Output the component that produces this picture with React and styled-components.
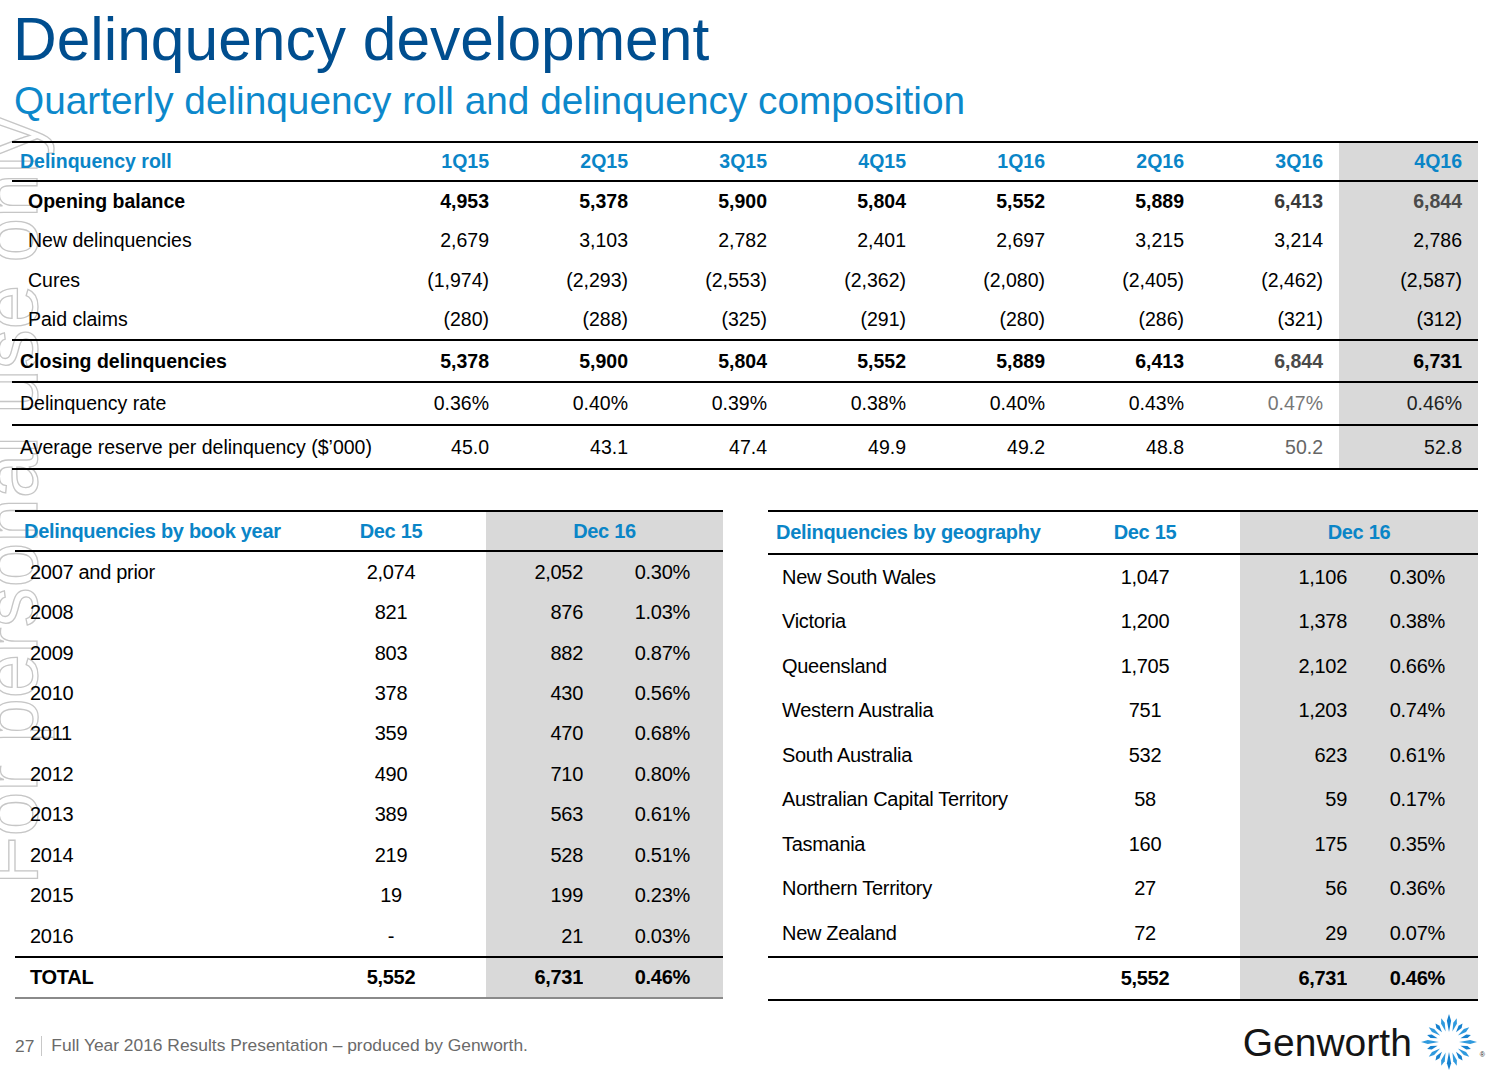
import React from "react";
import styled, { createGlobalStyle } from "styled-components";

const Global = createGlobalStyle`
  html, body { margin: 0; padding: 0; background: #fff; }
  body { font-family: "Liberation Sans", Arial, sans-serif; color: #000; }
`;

const Page = styled.div`
  position: relative;
  width: 1491px;
  height: 1071px;
  overflow: hidden;
  background: #fff;
`;

const Watermark = styled.div`
  position: absolute;
  left: -30px;
  top: 885px;
  transform-origin: 0 0;
  transform: rotate(-90deg);
  font-family: "Liberation Sans", Arial, sans-serif;
  font-size: 80px;
  line-height: 1;
  white-space: nowrap;
  color: transparent;
  -webkit-text-stroke: 1.3px #c6c6c6;
  z-index: 0;
  pointer-events: none;
`;

const Content = styled.div`
  position: relative;
  z-index: 1;
  display: flex;
  flex-direction: column;
  padding: 9px 13px 0 12px;
`;

const Title = styled.h1`
  margin: 0 0 0 1px;
  font-weight: 400;
  font-size: 60.5px;
  line-height: 60px;
  white-space: nowrap;
  color: #004e8f;
`;

const Subtitle = styled.h2`
  margin: 12px 0 0 2px;
  font-weight: 400;
  font-size: 38.8px;
  line-height: 39px;
  white-space: nowrap;
  color: #0c88cb;
`;

/* ---------- top table ---------- */
const RollTable = styled.div`
  margin-top: 21px;
  width: 1466px;
  border-top: 2px solid #000;
  display: flex;
  flex-direction: column;
`;

const RollRow = styled.div`
  display: grid;
  grid-template-columns: 354px repeat(7, 139px) 139px;
  height: ${(p) => p.$h}px;
  border-bottom: ${(p) => (p.$line ? "2px solid #000" : "none")};
  font-size: 19.5px;
  font-weight: ${(p) => (p.$bold ? 700 : 400)};
`;

const RollLabel = styled.div`
  display: flex;
  align-items: center;
  white-space: nowrap;
  padding-left: ${(p) => p.$indent}px;
  color: ${(p) => (p.$head ? "#0a85c7" : "#000")};
`;

const RollValue = styled.div`
  display: flex;
  align-items: center;
  justify-content: flex-end;
  padding-right: 16px;
  color: ${(p) => (p.$head ? "#0a85c7" : p.$tone || "#000")};
  background: ${(p) => (p.$shade ? "#d9d9d9" : "transparent")};
`;

/* ---------- bottom tables ---------- */
const BottomArea = styled.div`
  margin-top: 40px;
  display: flex;
  align-items: flex-start;
  gap: 45px;
  padding-left: 3px;
`;

const Table = styled.div`
  width: ${(p) => p.$w}px;
  border-top: 2px solid #000;
  border-bottom: 2px solid ${(p) => p.$bottom};
  display: flex;
  flex-direction: column;
  font-size: 20px;
  letter-spacing: -0.3px;
`;

const TRow = styled.div`
  display: grid;
  grid-template-columns: ${(p) => p.$cols};
  height: ${(p) => p.$h}px;
  border-bottom: ${(p) => (p.$line ? "2px solid #000" : "none")};
  font-weight: ${(p) => (p.$bold ? 700 : 400)};
`;

const TLabel = styled.div`
  display: flex;
  align-items: center;
  white-space: nowrap;
  padding-left: ${(p) => p.$indent}px;
  color: ${(p) => (p.$head ? "#0a85c7" : "#000")};
`;

const TCenter = styled.div`
  display: flex;
  align-items: center;
  justify-content: center;
  color: ${(p) => (p.$head ? "#0a85c7" : "#000")};
`;

const THeadShade = styled.div`
  grid-column: span 2;
  display: flex;
  align-items: center;
  justify-content: center;
  background: #d9d9d9;
  color: #0a85c7;
`;

const TShade = styled.div`
  display: flex;
  align-items: center;
  justify-content: flex-end;
  padding-right: ${(p) => p.$pr}px;
  background: #d9d9d9;
`;

/* ---------- footer ---------- */
const Footer = styled.div`
  margin-top: 11px;
  height: 60px;
  display: flex;
  align-items: center;
  justify-content: space-between;
`;

const FootText = styled.div`
  display: flex;
  align-items: center;
  padding: 8px 0 0 3px;
  font-size: 17.4px;
  color: #6a6a6a;
  white-space: nowrap;
`;

const PageNum = styled.span`
  padding-right: 7px;
  border-right: 1px solid #c8c8c8;
  margin-right: 9px;
  line-height: 20px;
`;

const Logo = styled.div`
  display: flex;
  align-items: center;
  margin-right: -7px;
`;

const LogoWord = styled.span`
  font-size: 39px;
  color: #151515;
  line-height: 1;
  margin-right: 7px;
  margin-top: 2px;
`;

const Reg = styled.span`
  font-size: 7px;
  color: #222;
  align-self: flex-end;
  margin-bottom: 14px;
  margin-left: 1px;
`;

const Star = () => {
  const rays = [];
  const n = 20;
  for (let i = 0; i < n; i++) {
    const a = ((i * 360) / n - 90) * (Math.PI / 180);
    const major = i % 5 === 0;
    const r1 = major ? 10 : i % 2 === 0 ? 12 : 11;
    const r2 = major ? 28 : i % 2 === 0 ? 23 : 25;
    const w = major ? 2.1 : 1.9;
    const rm = r1 + (r2 - r1) * 0.62;
    const cx = Math.cos(a);
    const cy = Math.sin(a);
    const px = -cy;
    const py = cx;
    const pts = [
      [cx * r1, cy * r1],
      [cx * rm + px * w, cy * rm + py * w],
      [cx * r2, cy * r2],
      [cx * rm - px * w, cy * rm - py * w],
    ]
      .map((p) => p.map((v) => v.toFixed(2)).join(","))
      .join(" ");
    rays.push(<polygon key={i} points={pts} fill={i % 2 ? "#2f9ade" : "#1581cf"} />);
  }
  return (
    <svg width="60" height="60" viewBox="-30 -30 60 60">
      {rays}
    </svg>
  );
};

const quarters = ["1Q15", "2Q15", "3Q15", "4Q15", "1Q16", "2Q16", "3Q16", "4Q16"];

const rollRows = [
  { label: "Opening balance", indent: 16, bold: true, h: 39.25, vals: ["4,953", "5,378", "5,900", "5,804", "5,552", "5,889", "6,413", "6,844"], tones: { 6: "#3a3a3a", 7: "#4a4a4a" } },
  { label: "New delinquencies", indent: 16, h: 39.25, vals: ["2,679", "3,103", "2,782", "2,401", "2,697", "3,215", "3,214", "2,786"] },
  { label: "Cures", indent: 16, h: 39.25, vals: ["(1,974)", "(2,293)", "(2,553)", "(2,362)", "(2,080)", "(2,405)", "(2,462)", "(2,587)"] },
  { label: "Paid claims", indent: 16, h: 39.25, line: true, vals: ["(280)", "(288)", "(325)", "(291)", "(280)", "(286)", "(321)", "(312)"] },
  { label: "Closing delinquencies", indent: 8, bold: true, h: 40, line: true, vals: ["5,378", "5,900", "5,804", "5,552", "5,889", "6,413", "6,844", "6,731"], tones: { 6: "#4a4a4a" } },
  { label: "Delinquency rate", indent: 8, h: 41, line: true, vals: ["0.36%", "0.40%", "0.39%", "0.38%", "0.40%", "0.43%", "0.47%", "0.46%"], tones: { 6: "#777", 7: "#222" } },
  { label: "Average reserve per delinquency ($\u2019000)", indent: 8, h: 42, line: true, vals: ["45.0", "43.1", "47.4", "49.9", "49.2", "48.8", "50.2", "52.8"], tones: { 6: "#666", 7: "#111" } },
];

const bookRows = [
  ["2007 and prior", "2,074", "2,052", "0.30%"],
  ["2008", "821", "876", "1.03%"],
  ["2009", "803", "882", "0.87%"],
  ["2010", "378", "430", "0.56%"],
  ["2011", "359", "470", "0.68%"],
  ["2012", "490", "710", "0.80%"],
  ["2013", "389", "563", "0.61%"],
  ["2014", "219", "528", "0.51%"],
  ["2015", "19", "199", "0.23%"],
  ["2016", "-", "21", "0.03%"],
];

const geoRows = [
  ["New South Wales", "1,047", "1,106", "0.30%"],
  ["Victoria", "1,200", "1,378", "0.38%"],
  ["Queensland", "1,705", "2,102", "0.66%"],
  ["Western Australia", "751", "1,203", "0.74%"],
  ["South Australia", "532", "623", "0.61%"],
  ["Australian Capital Territory", "58", "59", "0.17%"],
  ["Tasmania", "160", "175", "0.35%"],
  ["Northern Territory", "27", "56", "0.36%"],
  ["New Zealand", "72", "29", "0.07%"],
];

const BreakdownTable = ({ title, rows, total, cols, w, headH, rowH, totalH, indentHead, indent, bottom }) => (
  <Table $w={w} $bottom={bottom}>
    <TRow $cols={cols} $h={headH} $line $bold>
      <TLabel $head $indent={indentHead}>{title}</TLabel>
      <TCenter $head>Dec 15</TCenter>
      <THeadShade>Dec 16</THeadShade>
    </TRow>
    {rows.map((r, i) => (
      <TRow key={r[0]} $cols={cols} $h={rowH} $line={i === rows.length - 1}>
        <TLabel $indent={indent}>{r[0]}</TLabel>
        <TCenter>{r[1]}</TCenter>
        <TShade $pr={0}>{r[2]}</TShade>
        <TShade $pr={33}>{r[3]}</TShade>
      </TRow>
    ))}
    <TRow $cols={cols} $h={totalH} $bold>
      <TLabel $indent={indent}>{total[0]}</TLabel>
      <TCenter>{total[1]}</TCenter>
      <TShade $pr={0}>{total[2]}</TShade>
      <TShade $pr={33}>{total[3]}</TShade>
    </TRow>
  </Table>
);

export default function App() {
  return (
    <Page>
      <Global />
      <Watermark>For personal use only</Watermark>
      <Content>
        <Title>Delinquency development</Title>
        <Subtitle>Quarterly delinquency roll and delinquency composition</Subtitle>

        <RollTable>
          <RollRow $h={37} $line $bold>
            <RollLabel $head $indent={8}>Delinquency roll</RollLabel>
            {quarters.map((q, i) => (
              <RollValue key={q} $head $shade={i === 7}>{q}</RollValue>
            ))}
          </RollRow>
          {rollRows.map((r) => (
            <RollRow key={r.label} $h={r.h} $line={r.line} $bold={r.bold}>
              <RollLabel $indent={r.indent}>{r.label}</RollLabel>
              {r.vals.map((v, i) => (
                <RollValue key={i} $shade={i === 7} $tone={r.tones && r.tones[i]}>{v}</RollValue>
              ))}
            </RollRow>
          ))}
        </RollTable>

        <BottomArea>
          <BreakdownTable
            title="Delinquencies by book year"
            rows={bookRows}
            total={["TOTAL", "5,552", "6,731", "0.46%"]}
            cols="281px 190px 97px 140px"
            w={708}
            headH={38}
            rowH={40.45}
            totalH={38.5}
            indentHead={9}
            indent={15}
            bottom="#8a8a8a"
          />
          <BreakdownTable
            title="Delinquencies by geography"
            rows={geoRows}
            total={["", "5,552", "6,731", "0.46%"]}
            cols="282px 190px 107px 131px"
            w={710}
            headH={41}
            rowH={44.5}
            totalH={41}
            indentHead={8}
            indent={14}
            bottom="#000"
          />
        </BottomArea>

        <Footer>
          <FootText>
            <PageNum>27</PageNum>
            Full Year 2016 Results Presentation – produced by Genworth.
          </FootText>
          <Logo>
            <LogoWord>Genworth</LogoWord>
            <Star />
            <Reg>®</Reg>
          </Logo>
        </Footer>
      </Content>
    </Page>
  );
}
